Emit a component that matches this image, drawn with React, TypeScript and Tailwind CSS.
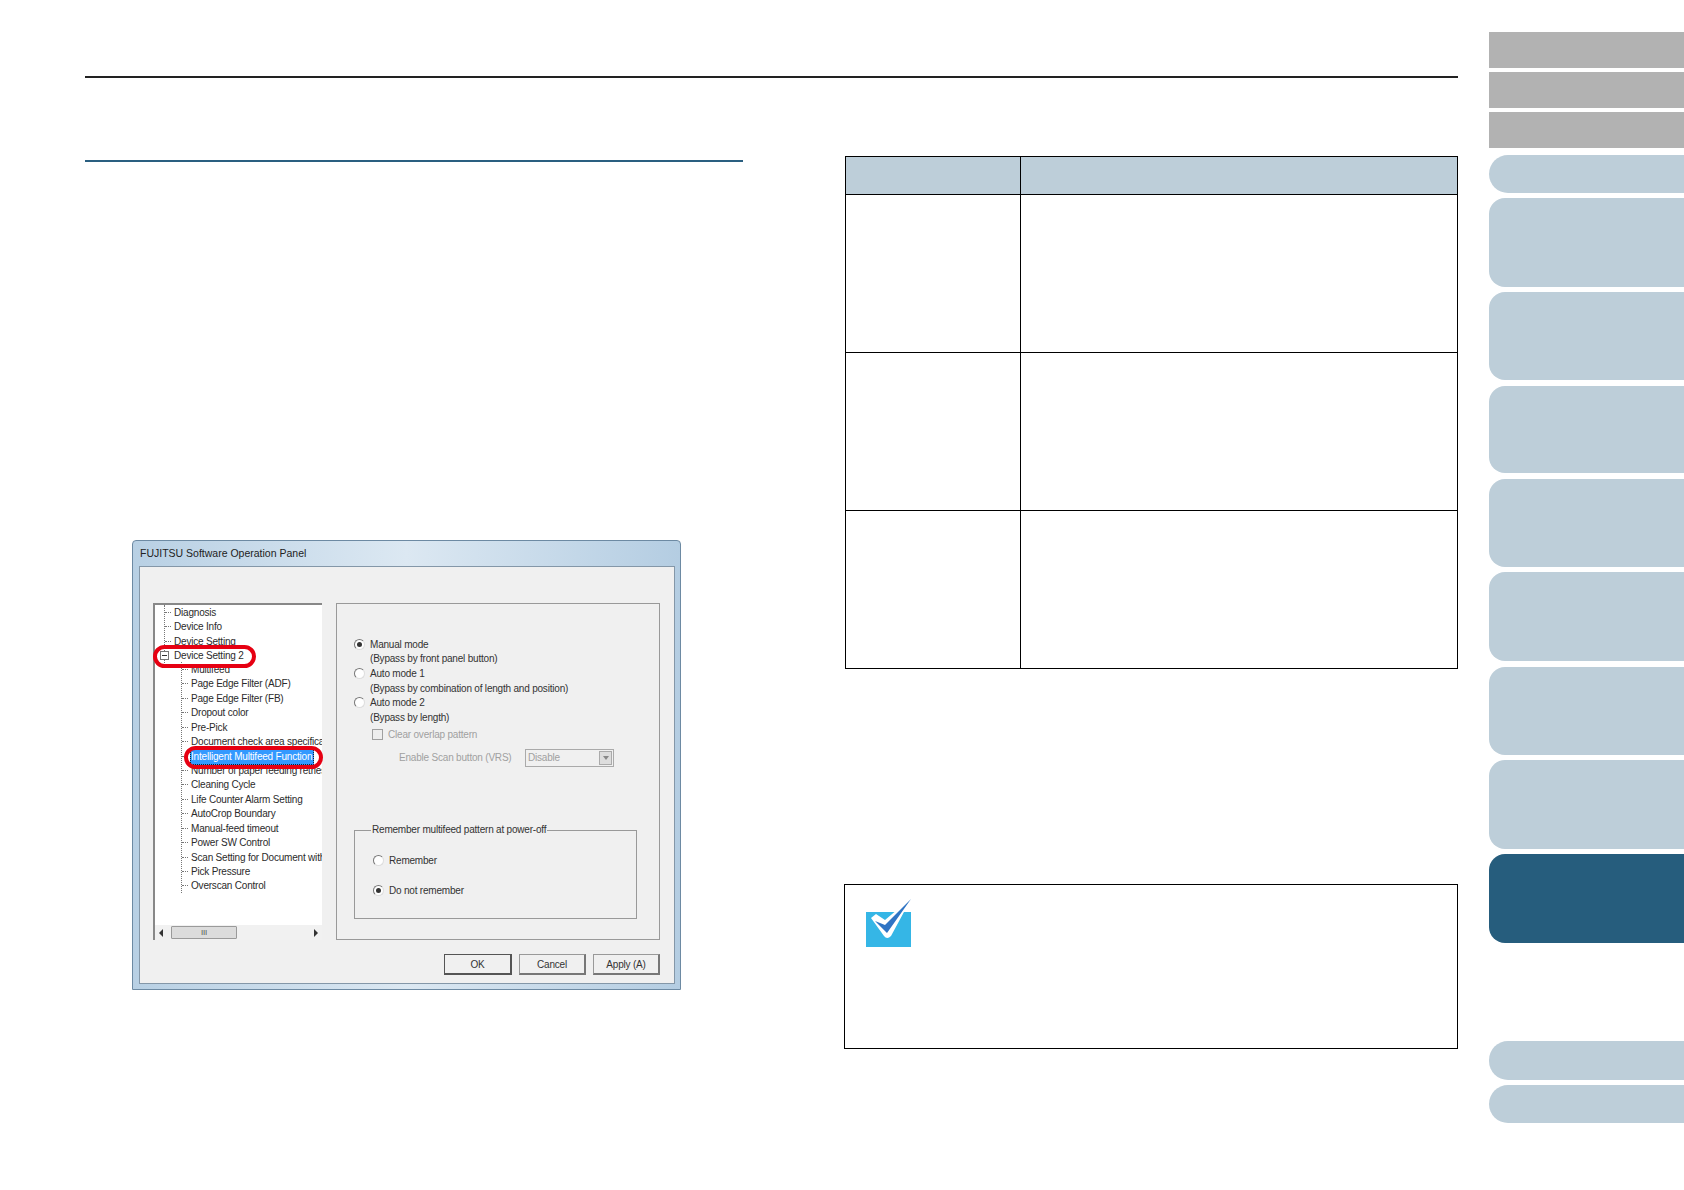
const font = "font-['Liberation_Sans',Arial,sans-serif]";

const treeTop = ["Diagnosis", "Device Info", "Device Setting"];
const treeSub = [
  "Multifeed",
  "Page Edge Filter (ADF)",
  "Page Edge Filter (FB)",
  "Dropout color",
  "Pre-Pick",
  "Document check area specification",
  "Intelligent Multifeed Function",
  "Number of paper feeding retries",
  "Cleaning Cycle",
  "Life Counter Alarm Setting",
  "AutoCrop Boundary",
  "Manual-feed timeout",
  "Power SW Control",
  "Scan Setting for Document with",
  "Pick Pressure",
  "Overscan Control",
];

function Radio({ checked }: { checked?: boolean }) {
  return (
    <span className="flex h-[11px] w-[11px] shrink-0 items-center justify-center rounded-full border border-b-[#ddd] border-l-[#777] border-r-[#ddd] border-t-[#777] bg-white">
      {checked && <span className="h-[5px] w-[5px] rounded-full bg-[#333]" />}
    </span>
  );
}

function Btn({ label, primary }: { label: string; primary?: boolean }) {
  return (
    <div
      className={`flex h-[21px] items-center justify-center border bg-[#f0f0f0] text-[#333] ${
        primary ? "w-[68px] border-[#555] border-b-2 border-r-2" : "w-[67px] border-[#999] border-b-2 border-r-2 border-b-[#777] border-r-[#777]"
      }`}
    >
      {label}
    </div>
  );
}

function TreePanel() {
  return (
    <div className="relative h-[337px] w-[169px] shrink-0 border-l-2 border-t-2 border-[#888] bg-white text-[#2b2b2b]">
      <div className="h-full overflow-hidden">
        <div className="ml-[9px] w-[420px] border-l border-dotted border-[#777]">
          {treeTop.map((t) => (
            <div key={t} className="flex h-[14.55px] items-center whitespace-nowrap">
              <span className="mr-[3px] w-[6px] border-t border-dotted border-[#777]" />
              {t}
            </div>
          ))}
          <div className="relative -ml-[5px] flex h-[14.55px] items-center whitespace-nowrap">
            <span className="mr-[4px] flex h-[9px] w-[9px] items-center justify-center border border-[#777] bg-white">
              <span className="h-px w-[5px] bg-[#333]" />
            </span>
            <span className="ml-[1px]">Device Setting 2</span>
          </div>
        </div>
        <div className="-mt-[1px] ml-[26px] w-[420px] border-l border-dotted border-[#777]">
          {treeSub.map((t) => (
            <div key={t} className="flex h-[14.45px] items-center whitespace-nowrap">
              <span className="mr-[3px] w-[6px] border-t border-dotted border-[#777]" />
              {t === "Intelligent Multifeed Function" ? (
                <span className="-ml-[1px] border border-dotted border-[#123] bg-[#3399ff] pr-[1px] text-white">{t}</span>
              ) : (
                t
              )}
            </div>
          ))}
        </div>
      </div>
      <div className="absolute bottom-0 left-0 right-0 flex h-[15px] items-center bg-[#f1f1f1] px-[4px]">
        <span className="border-y-[4px] border-r-[4px] border-y-transparent border-r-[#333]" />
        <div className="ml-[8px] flex h-[13px] w-[66px] items-center justify-center rounded-[1px] border border-[#9a9a9a] bg-[#dcdcdc] text-[8px] leading-none text-[#555]">
          III
        </div>
        <span className="ml-auto border-y-[4px] border-l-[4px] border-y-transparent border-l-[#333]" />
      </div>
      {/* red marks laid over the screenshot */}
      <div className="absolute left-[-2px] top-[40px] h-[23px] w-[103px] rounded-full border-[4px] border-[#e60012]" />
      <div className="absolute left-[29px] top-[141px] h-[23px] w-[139px] rounded-full border-[4px] border-[#e60012]" />
    </div>
  );
}

function OptionPanel() {
  return (
    <div className="ml-[14px] h-[337px] w-[324px] shrink-0 border border-[#999] pl-[18px] pt-[33px] text-[#333]">
      <div className="-ml-[1px] flex h-[14.6px] items-center gap-[5px]">
        <Radio checked />
        Manual mode
      </div>
      <div className="flex h-[14.6px] items-center pl-[15px]">(Bypass by front panel button)</div>
      <div className="-ml-[1px] flex h-[14.6px] items-center gap-[5px]">
        <Radio />
        Auto mode 1
      </div>
      <div className="flex h-[14.6px] items-center pl-[15px]">(Bypass by combination of length and position)</div>
      <div className="-ml-[1px] flex h-[14.6px] items-center gap-[5px]">
        <Radio />
        Auto mode 2
      </div>
      <div className="flex h-[14.6px] items-center pl-[15px]">(Bypass by length)</div>
      <div className="mt-[2px] flex h-[15px] items-center gap-[5px] pl-[17px] text-[#a0a0a0]">
        <span className="h-[11px] w-[11px] border border-[#a0a0a0] bg-[#eee]" />
        Clear overlap pattern
      </div>
      <div className="mt-[7px] flex items-center pl-[44px] text-[#a0a0a0]">
        <span className="w-[126px] whitespace-nowrap">Enable Scan button (VRS)</span>
        <div className="flex h-[18px] w-[89px] items-center justify-between border border-[#aaa] pl-[2px] pr-[1px]">
          Disable
          <span className="flex h-[14px] w-[13px] items-center justify-center border border-[#aaa] bg-[#ddd]">
            <span className="border-x-[3px] border-t-[4px] border-x-transparent border-t-[#888]" />
          </span>
        </div>
      </div>
      <div className="relative -ml-[1px] mt-[63px] h-[89px] w-[283px] border border-[#999] pl-[18px] pt-[23px]">
        <span className="absolute left-[16px] top-[-8px] bg-[#f0f0f0] px-[1px] leading-[14px]">Remember multifeed pattern at power-off</span>
        <div className="flex h-[14px] items-center gap-[5px]">
          <Radio />
          Remember
        </div>
        <div className="mt-[16px] flex h-[14px] items-center gap-[5px]">
          <Radio checked />
          Do not remember
        </div>
      </div>
    </div>
  );
}

function DialogShot() {
  return (
    <div className={`ml-[47px] h-[450px] w-[549px] rounded-t-[4px] border border-[#6d8aa3] bg-linear-to-r from-[#b8d0e4] via-[#dce8f2] to-[#b4cde2] pb-[5px] pl-[6px] pr-[5px] text-[10px] tracking-[-0.2px] ${font}`}>
      <div className="flex h-[25px] items-center pl-[1px] text-[10.5px] tracking-normal text-[#222]">FUJITSU Software Operation Panel</div>
      <div className="h-[418px] border border-[#8497a8] bg-[#f0f0f0] pl-[13px] pt-[36px]">
        <div className="flex">
          <TreePanel />
          <OptionPanel />
        </div>
        <div className="mt-[14px] flex justify-end gap-[7px] pr-[14px]">
          <Btn label="OK" primary />
          <Btn label="Cancel" />
          <Btn label="Apply (A)" />
        </div>
      </div>
    </div>
  );
}

function CheckIcon() {
  return (
    <svg className="ml-[21px] mt-[14px] block" width="46" height="48" viewBox="0 0 46 48">
      <rect x="0" y="13" width="45" height="35" fill="#35b6e6" />
      <path d="M5 19 L10 15 L19 21 L38 5 L45 0 L25 37 Q21 41 18 37 Z" fill="#fff" />
      <path d="M9 22 L19 26 L45 0 L21 34 Z" fill="#2f74c4" />
    </svg>
  );
}

function SideTab({ className }: { className: string }) {
  return <div className={className} />;
}

export default function App() {
  const grey = "mb-[4px] h-[36px] bg-[#b2b2b2]";
  const tab = "rounded-l-[16px] bg-[#bdced9]";
  const pill = "rounded-l-[19px] bg-[#bdced9]";

  return (
    <div className="flex h-[1190px] w-[1684px] overflow-hidden bg-white">
      <main className="w-[1458px] shrink-0 pl-[85px]">
        <div className="mt-[76px] border-b-2 border-[#222]" />
        <div className="flex">
          <section className="w-[658px]">
            <div className="mt-[82px] border-b-2 border-[#2a5f80]" />
            <div className="mt-[378px]">
              <DialogShot />
            </div>
          </section>
          <section className="ml-[102px] w-[613px]">
            <div className="mt-[78px] grid grid-cols-[175px_1fr] border border-black">
              <div className="h-[38px] border-b border-r border-black bg-[#bdced9]" />
              <div className="h-[38px] border-b border-black bg-[#bdced9]" />
              <div className="h-[158px] border-b border-r border-black" />
              <div className="h-[158px] border-b border-black" />
              <div className="h-[158px] border-b border-r border-black" />
              <div className="h-[158px] border-b border-black" />
              <div className="h-[157px] border-r border-black" />
              <div className="h-[157px]" />
            </div>
            <div className="ml-[-1px] mt-[215px] h-[165px] w-[614px] border border-black">
              <CheckIcon />
            </div>
          </section>
        </div>
      </main>
      <aside className="ml-[31px] w-[195px] shrink-0 pt-[32px]">
        <SideTab className={grey} />
        <SideTab className={grey} />
        <SideTab className={grey} />
        <SideTab className={`mt-[7px] h-[38px] ${pill}`} />
        <SideTab className={`mt-[5px] h-[89px] ${tab}`} />
        <SideTab className={`mt-[5px] h-[88px] ${tab}`} />
        <SideTab className={`mt-[6px] h-[87px] ${tab}`} />
        <SideTab className={`mt-[6px] h-[88px] ${tab}`} />
        <SideTab className={`mt-[5px] h-[89px] ${tab}`} />
        <SideTab className={`mt-[6px] h-[88px] ${tab}`} />
        <SideTab className={`mt-[5px] h-[89px] ${tab}`} />
        <SideTab className="mt-[5px] h-[89px] rounded-l-[16px] bg-[#265d7d]" />
        <SideTab className={`mt-[98px] h-[39px] ${pill}`} />
        <SideTab className={`mt-[5px] h-[38px] ${pill}`} />
      </aside>
    </div>
  );
}
